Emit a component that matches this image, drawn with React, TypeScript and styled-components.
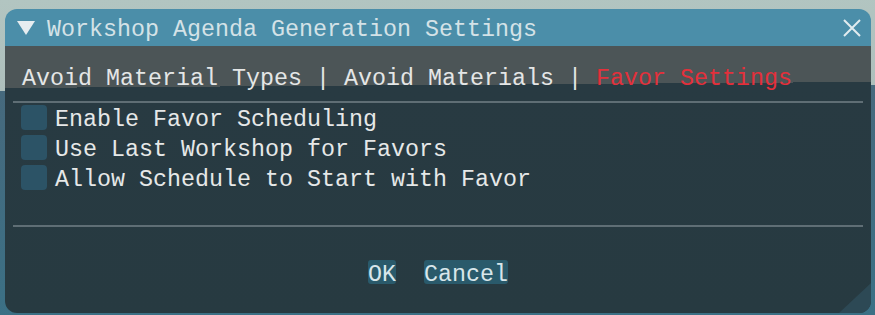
import React from 'react';
import styled, { createGlobalStyle } from 'styled-components';

const GlobalStyle = createGlobalStyle`
    html, body {
        margin: 0;
        padding: 0;
    }
    body {
        background: linear-gradient(179.6deg, #b2c5c1 0, #aebfbc 91px, #46697d 91px, #3b7085 100%);
        font-family: "Liberation Mono", "DejaVu Sans Mono", monospace;
        font-size: 23.33px;
    }
`

const Page = styled.div`
    box-sizing: border-box;
    min-height: 315px;
    padding: 9px 0 0 5px;
`

const Window = styled.div`
    width: 866px;
    height: 304px;
    border-radius: 12px;
    overflow: hidden;
    display: flex;
    flex-direction: column;
`

const TitleBar = styled.div`
    height: 37px;
    flex: none;
    display: flex;
    align-items: center;
    padding: 0 10px 0 12px;
    background: #4b8ea9;
    overflow: hidden;
`

const Title = styled.span`
    flex: 1;
    align-self: flex-start;
    margin-left: 12px;
    line-height: 42px;
    color: #d4e2e7;
    white-space: pre;
`

const Body = styled.div`
    position: relative;
    flex: 1;
    padding: 0 8px;
    background: linear-gradient(179.6deg, #4c5557 0, #4c5557 42px, #283a42 42px, #273a41 100%);
`

const Tabs = styled.div`
    margin-top: 18px;
    padding-left: 9px;
    line-height: 30px;
    height: 30px;
    color: #e4e6e6;
    white-space: pre;
`

const Tab = styled.span<{ $active?: boolean }>`
    color: ${({ $active }) => ($active ? '#e3303b' : '#e4e6e6')};
`

const Separator = styled.div<{ $gap: number }>`
    height: 2px;
    margin-top: ${({ $gap }) => $gap}px;
    background: #5f6e75;
`

const Options = styled.div`
    margin-top: 2px;
    display: flex;
    flex-direction: column;
    gap: 5px;
`

const Row = styled.label`
    height: 25px;
    display: flex;
    align-items: flex-start;
    gap: 8px;
    padding-left: 8px;
`

const Box = styled.span`
    width: 26px;
    height: 25px;
    border-radius: 4px;
    background: #2c5366;
`

const RowText = styled.span`
    line-height: 25px;
    padding-top: 3px;
    color: #e6e8e8;
    white-space: pre;
`

const Buttons = styled.div`
    margin-top: 33px;
    display: flex;
    justify-content: center;
    gap: 28px;
`

const Button = styled.button`
    box-sizing: border-box;
    height: 24px;
    padding: 3px 0 0;
    border: none;
    border-radius: 3px;
    background: #2a5a6b;
    color: #d8e6ea;
    font: inherit;
    line-height: 24px;
    display: inline-flex;
    align-items: flex-start;
`

const ResizeGrip = styled.div`
    position: absolute;
    right: 0;
    bottom: 0;
    width: 32px;
    height: 30px;
    background: #2d4955;
    clip-path: polygon(100% 0, 100% 100%, 0 100%);
`

const options = [
    'Enable Favor Scheduling',
    'Use Last Workshop for Favors',
    'Allow Schedule to Start with Favor',
]

const App = () => {
    return (
        <Page>
            <GlobalStyle />
            <Window>
                <TitleBar>
                    <svg width='18' height='14' viewBox='0 0 18 14'>
                        <polygon points='0,0 18,0 9,14' fill='#e6edf0' />
                    </svg>
                    <Title>Workshop Agenda Generation Settings</Title>
                    <svg width='18' height='18' viewBox='0 0 18 18'>
                        <path d='M1 1 L17 17 M17 1 L1 17' stroke='#e2ecef' strokeWidth='2' />
                    </svg>
                </TitleBar>
                <Body>
                    <Tabs>
                        <Tab>Avoid Material Types</Tab>
                        {' | '}
                        <Tab>Avoid Materials</Tab>
                        {' | '}
                        <Tab $active>Favor Settings</Tab>
                    </Tabs>
                    <Separator $gap={7} />
                    <Options>
                        {options.map((o) => (
                            <Row key={o}>
                                <Box />
                                <RowText>{o}</RowText>
                            </Row>
                        ))}
                    </Options>
                    <Separator $gap={35} />
                    <Buttons>
                        <Button>OK</Button>
                        <Button>Cancel</Button>
                    </Buttons>
                    <ResizeGrip />
                </Body>
            </Window>
        </Page>
    )
}

export default App;
